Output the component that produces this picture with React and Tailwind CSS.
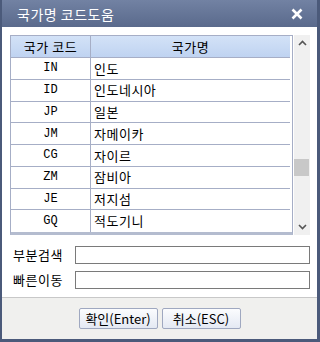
import { useState } from "react";

const rows = [
  ["IN", "인도"],
  ["ID", "인도네시아"],
  ["JP", "일본"],
  ["JM", "자메이카"],
  ["CG", "자이르"],
  ["ZM", "잠비아"],
  ["JE", "저지섬"],
  ["GQ", "적도기니"],
];

const kr = { fontFamily: '"Noto Sans CJK KR", "Noto Sans", sans-serif' };
const mono = { fontFamily: '"Liberation Mono", "DejaVu Sans Mono", monospace' };

export default function App() {
  const [search, setSearch] = useState("");
  const [jump, setJump] = useState("");

  return (
    <div className="w-[320px] h-[342px] bg-[#4b5a7a] pl-[2px] pr-[3px] pb-[3px] flex flex-col" style={kr}>
      {/* title */}
      <div className="h-[27px] shrink-0 flex items-center justify-between pl-[15px] pr-[14px] bg-gradient-to-b from-[#7282a3] to-[#5a6a8c]">
        <span className="text-white text-[14px] leading-none tracking-[0.5px]">국가명 코드도움</span>
        <svg width="12" height="12" viewBox="0 0 12 12">
          <path d="M1.5 1.5 L10.5 10.5 M10.5 1.5 L1.5 10.5" stroke="#fff" strokeWidth="2.6" />
        </svg>
      </div>

      {/* body */}
      <div className="bg-white flex-1 flex flex-col pt-[8px] pl-[8px] pr-[7px]">
        <div className="flex gap-[1px]">
          <div className="flex-1 border border-[#a6aec6] border-b-[3px] border-b-[#b4bccf] pr-[2px]">
            <div className="flex h-[22px] border-b border-[#a6aec6] bg-gradient-to-b from-[#d3e2f7] to-[#bfd3f1] text-[13px] text-black">
              <div className="w-[80px] border-r border-[#a6aec6] flex items-center justify-center tracking-[0.5px]">국가 코드</div>
              <div className="flex-1 flex items-center justify-center tracking-[0.5px]">국가명</div>
            </div>
            {rows.map(([code, name]) => (
              <div key={code} className="flex h-[21.75px] border-b border-[#a6aec6] last:border-b-0 text-[13px] text-black">
                <div className="w-[80px] border-r border-[#a6aec6] flex items-center justify-center text-[12px]" style={mono}>
                  {code}
                </div>
                <div className="flex-1 flex items-center pl-[3px] tracking-[0.5px]">{name}</div>
              </div>
            ))}
          </div>
          <div className="w-[16px] bg-[#f0f0f0] flex flex-col items-center justify-between py-[5px]">
            <svg width="9" height="6" viewBox="0 0 9 6">
              <path d="M1 5 L4.5 1.5 L8 5" stroke="#555" strokeWidth="1.6" fill="none" />
            </svg>
            <div className="flex-1 w-full flex flex-col pt-[113px]">
              <div className="w-[15px] h-[17px] bg-[#c8c8c8]" />
            </div>
            <svg width="9" height="6" viewBox="0 0 9 6">
              <path d="M1 1 L4.5 4.5 L8 1" stroke="#555" strokeWidth="1.6" fill="none" />
            </svg>
          </div>
        </div>

        <div className="mt-[11px] flex flex-col gap-[7px] pl-[3px]">
          <div className="flex items-center h-[18px]">
            <span className="w-[62px] text-[13px] text-black tracking-[0.5px]">부분검색</span>
            <input
              value={search}
              onChange={(e) => setSearch(e.target.value)}
              className="flex-1 h-[18px] border border-[#7a7a7a] outline-none text-[12px] px-1"
            />
          </div>
          <div className="flex items-center h-[18px]">
            <span className="w-[62px] text-[13px] text-black tracking-[0.5px]">빠른이동</span>
            <input
              value={jump}
              onChange={(e) => setJump(e.target.value)}
              className="flex-1 h-[18px] border border-[#7a7a7a] outline-none text-[12px] px-1"
            />
          </div>
        </div>
        <div className="flex-1" />
      </div>

      {/* footer */}
      <div className="h-[42px] shrink-0 bg-[#f0f0ee] border-t border-[#c8c8c8] flex items-center justify-center gap-[4px]">
        <button className="w-[79px] h-[21px] rounded-[2px] border border-[#9fa8c0] bg-gradient-to-b from-[#fbfcfe] to-[#e4e9f3] text-[13px] text-black leading-none">
          확인(Enter)
        </button>
        <button className="w-[79px] h-[21px] rounded-[2px] border border-[#9fa8c0] bg-gradient-to-b from-[#fbfcfe] to-[#e4e9f3] text-[13px] text-black leading-none">
          취소(ESC)
        </button>
      </div>
    </div>
  );
}
